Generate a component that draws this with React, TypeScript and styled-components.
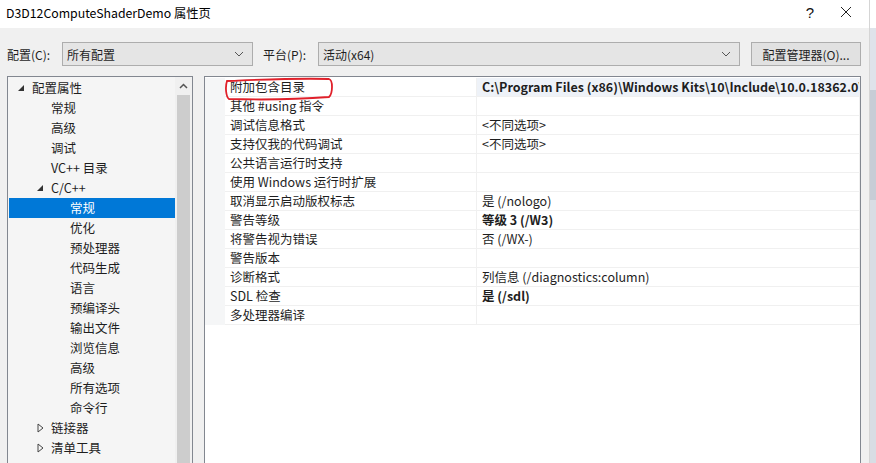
import React from "react";
import styled, { createGlobalStyle } from "styled-components";

const Global = createGlobalStyle`
  html, body { margin: 0; padding: 0; background: #f0f0f0; }
  body { font-family: "Noto Sans CJK SC", "Noto Sans", sans-serif; font-size: 12px; color: #1e1e1e; }
`;

const Screen = styled.div`
  display: flex;
  width: 876px;
  height: 463px;
  overflow: hidden;
`;

const Dialog = styled.div`
  width: 869px;
  display: flex;
  flex-direction: column;
  background: #f0f0f0;
`;

const Strip = styled.div`
  flex: 1;
  background: linear-gradient(#ffffff 0 28px, #dfe3ea 28px 90px, #c7cdd6 90px 200px, #d8dde4 200px);
  border-left: 1px solid #d5d5d5;
`;

const TitleBar = styled.div`
  height: 28px;
  flex: none;
  background: #ffffff;
  display: flex;
  align-items: center;
  padding-left: 6px;
  font-size: 12.3px;
  color: #000;
`;

const TitleText = styled.div`
  flex: 1;
  margin-top: -3px;
`;

const TitleButton = styled.div<{ $w: number }>`
  width: ${(p) => p.$w}px;
  text-align: center;
  font-size: 15px;
  font-family: "Liberation Sans", sans-serif;
  color: #111;
  margin-top: -3px;
`;

const Body = styled.div`
  flex: 1;
  display: flex;
  flex-direction: column;
  padding: 14px 0 0 7px;
  min-height: 0;
`;

const Toolbar = styled.div`
  display: flex;
  align-items: center;
  height: 24px;
`;

const Label = styled.span<{ $w: number; $gap?: number }>`
  width: ${(p) => p.$w}px;
  margin-left: ${(p) => p.$gap ?? 0}px;
  flex: none;
`;

const Combo = styled.div<{ $w: number }>`
  width: ${(p) => p.$w}px;
  height: 24px;
  box-sizing: border-box;
  border: 1px solid #adadad;
  background: #e5e5e5;
  display: flex;
  align-items: center;
  padding-left: 4px;
  padding-right: 8px;
  flex: none;
`;

const ComboText = styled.span`
  flex: 1;
`;

const Button = styled.div`
  margin-left: 11px;
  width: 110px;
  height: 24px;
  box-sizing: border-box;
  border: 1px solid #adadad;
  background: #e1e1e1;
  display: flex;
  align-items: center;
  justify-content: center;
`;

const Main = styled.div`
  flex: 1;
  display: flex;
  margin-top: 10px;
  min-height: 0;
`;

const Tree = styled.div`
  width: 186px;
  flex: none;
  box-sizing: border-box;
  border: 1px solid #828790;
  border-bottom: none;
  background: #f5f5f5;
  display: flex;
  padding-top: 1px;
`;

const TreeList = styled.div`
  flex: 1;
  display: flex;
  flex-direction: column;
  padding-left: 1px;
`;

const TreeRow = styled.div<{ $level: number; $selected?: boolean }>`
  height: 20px;
  display: flex;
  align-items: center;
  padding-left: ${(p) => 10 + p.$level * 19}px;
  background: ${(p) => (p.$selected ? "#0078d7" : "transparent")};
  color: ${(p) => (p.$selected ? "#ffffff" : "#1e1e1e")};
  font-size: 12.5px;
  line-height: 20px;
`;

const Toggle = styled.span`
  width: 14px;
  flex: none;
  display: flex;
  align-items: center;
  margin-left: -1px;
`;

const Scrollbar = styled.div`
  width: 17px;
  flex: none;
  display: flex;
  flex-direction: column;
  background: #f0f0f0;
  margin-top: -1px;
`;

const ScrollArrow = styled.div`
  height: 18px;
  display: flex;
  align-items: center;
  justify-content: center;
`;

const ScrollThumb = styled.div`
  flex: 1;
  margin: 0 2px;
  background: #cdcdcd;
`;

const Grid = styled.div`
  margin-left: 11px;
  width: 657px;
  flex: none;
  box-sizing: border-box;
  border: 1px solid #828790;
  border-bottom: none;
  background: #ffffff;
  position: relative;
  padding-top: 1px;
`;

const GridRow = styled.div`
  display: grid;
  grid-template-columns: 20px 252px 1fr;
  height: 19px;
`;

const Margin = styled.div`
  background: #f5f6f7;
`;

const Cell = styled.div<{ $bold?: boolean; $shade?: boolean }>`
  border-bottom: 1px solid #f0f0f0;
  border-right: 1px solid #f0f0f0;
  padding-left: 5px;
  line-height: 18px;
  white-space: nowrap;
  overflow: hidden;
  font-size: 12.5px;
  font-weight: ${(p) => (p.$bold ? 700 : 400)};
  background: ${(p) => (p.$shade ? "#eef2f8" : "transparent")};
  color: #1e1e1e;
`;

const Mark = styled.svg`
  position: absolute;
  left: 18px;
  top: 0px;
  pointer-events: none;
`;

const Chevron = () => (
  <svg width="10" height="6" viewBox="0 0 10 6">
    <path d="M1 1 L5 5 L9 1" fill="none" stroke="#555" strokeWidth="1" />
  </svg>
);

const Expanded = () => (
  <svg width="7" height="7" viewBox="0 0 7 7">
    <path d="M6 0 L6 6 L0 6 Z" fill="#333" />
  </svg>
);

const Collapsed = () => (
  <svg width="7" height="10" viewBox="0 0 7 10">
    <path d="M1 1 L6 5 L1 9 Z" fill="none" stroke="#444" strokeWidth="1" />
  </svg>
);

type Node = { label: string; level: number; toggle?: "open" | "closed"; selected?: boolean };

const treeNodes: Node[] = [
  { label: "配置属性", level: 0, toggle: "open" },
  { label: "常规", level: 1 },
  { label: "高级", level: 1 },
  { label: "调试", level: 1 },
  { label: "VC++ 目录", level: 1 },
  { label: "C/C++", level: 1, toggle: "open" },
  { label: "常规", level: 2, selected: true },
  { label: "优化", level: 2 },
  { label: "预处理器", level: 2 },
  { label: "代码生成", level: 2 },
  { label: "语言", level: 2 },
  { label: "预编译头", level: 2 },
  { label: "输出文件", level: 2 },
  { label: "浏览信息", level: 2 },
  { label: "高级", level: 2 },
  { label: "所有选项", level: 2 },
  { label: "命令行", level: 2 },
  { label: "链接器", level: 1, toggle: "closed" },
  { label: "清单工具", level: 1, toggle: "closed" },
];

type Prop = { name: string; value: string; bold?: boolean };

const props: Prop[] = [
  { name: "附加包含目录", value: "C:\\Program Files (x86)\\Windows Kits\\10\\Include\\10.0.18362.0\\um;%(AdditionalIncludeDirectories)", bold: true },
  { name: "其他 #using 指令", value: "" },
  { name: "调试信息格式", value: "<不同选项>" },
  { name: "支持仅我的代码调试", value: "<不同选项>" },
  { name: "公共语言运行时支持", value: "" },
  { name: "使用 Windows 运行时扩展", value: "" },
  { name: "取消显示启动版权标志", value: "是 (/nologo)" },
  { name: "警告等级", value: "等级 3 (/W3)", bold: true },
  { name: "将警告视为错误", value: "否 (/WX-)" },
  { name: "警告版本", value: "" },
  { name: "诊断格式", value: "列信息 (/diagnostics:column)" },
  { name: "SDL 检查", value: "是 (/sdl)", bold: true },
  { name: "多处理器编译", value: "" },
];

export default function App() {
  return (
    <Screen>
      <Global />
      <Dialog>
        <TitleBar>
          <TitleText>D3D12ComputeShaderDemo 属性页</TitleText>
          <TitleButton $w={26}>?</TitleButton>
          <TitleButton $w={46}>
            <svg width="12" height="12" viewBox="0 0 12 12">
              <path d="M1 1 L11 11 M11 1 L1 11" stroke="#222" strokeWidth="1" />
            </svg>
          </TitleButton>
        </TitleBar>
        <Body>
          <Toolbar>
            <Label $w={55}>配置(C):</Label>
            <Combo $w={191}>
              <ComboText>所有配置</ComboText>
              <Chevron />
            </Combo>
            <Label $w={55} $gap={10}>平台(P):</Label>
            <Combo $w={422}>
              <ComboText>活动(x64)</ComboText>
              <Chevron />
            </Combo>
            <Button>配置管理器(O)...</Button>
          </Toolbar>
          <Main>
            <Tree>
              <TreeList>
                {treeNodes.map((n, i) => (
                  <TreeRow key={i} $level={n.level} $selected={n.selected}>
                    <Toggle>
                      {n.toggle === "open" ? <Expanded /> : n.toggle === "closed" ? <Collapsed /> : null}
                    </Toggle>
                    {n.label}
                  </TreeRow>
                ))}
              </TreeList>
              <Scrollbar>
                <ScrollArrow>
                  <svg width="9" height="6" viewBox="0 0 9 6">
                    <path d="M1 5 L4.5 1.5 L8 5" fill="none" stroke="#555" strokeWidth="1.5" />
                  </svg>
                </ScrollArrow>
                <ScrollThumb />
              </Scrollbar>
            </Tree>
            <Grid>
              {props.map((p, i) => (
                <GridRow key={i}>
                  <Margin />
                  <Cell>{p.name}</Cell>
                  <Cell $bold={p.bold} $shade={i === 0}>
                    {p.value}
                  </Cell>
                </GridRow>
              ))}
              <Mark width="112" height="26" viewBox="0 0 112 26">
                <path
                  d="M4 4 C30 3, 70 1, 106 2 C110 3, 110 16, 106 20 C80 22, 40 23, 6 22 C3 20, 2 10, 4 4 Z"
                  fill="none"
                  stroke="#e0202a"
                  strokeWidth="1.8"
                />
              </Mark>
            </Grid>
          </Main>
        </Body>
      </Dialog>
      <Strip />
    </Screen>
  );
}
